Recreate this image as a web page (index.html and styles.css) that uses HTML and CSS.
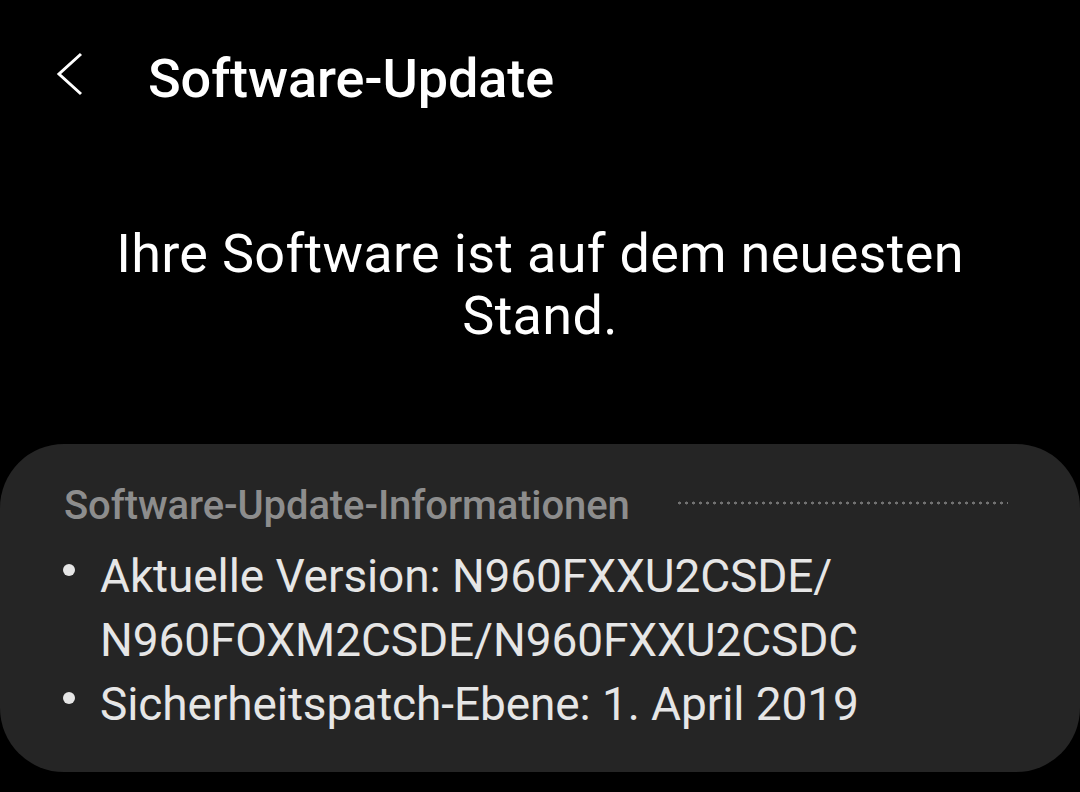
FILE: index.html
```html
<!DOCTYPE html>
<html>
<head>
	<title>Software-Update</title>
	<link rel="stylesheet" href="styles.css">
</head>
<body>
	<div class="screen">
		<header class="appbar">
			<svg class="back" width="28" height="44" viewBox="0 0 28 44">
				<polyline points="25,2 3,22 25,42" fill="none" stroke="#fff" stroke-width="3"/>
			</svg>
			<h1 class="title">Software-Update</h1>
		</header>

		<p class="status">Ihre Software ist auf dem neuesten Stand.</p>

		<section class="card">
			<div class="card_head">
				<span class="card_title">Software-Update-Informationen</span>
				<span class="dots"></span>
			</div>
			<ul class="info">
				<li>Aktuelle Version: N960FXXU2CSDE/ N960FOXM2CSDE/N960FXXU2CSDC</li>
				<li>Sicherheitspatch-Ebene: 1. April 2019</li>
			</ul>
		</section>
	</div>
</body>
</html>
```

FILE: styles.css
```css
html, body { margin: 0; padding: 0; background: #000; }
body { font-family: Roboto, "Noto Sans", sans-serif; color: #fff; }

.screen { width: 1080px; height: 792px; overflow: hidden; }

.appbar { display: flex; align-items: center; height: 80px; padding: 38px 0 0 56px; }
.back { margin-right: 64px; margin-bottom: 9px; }
.title { margin: 0; font-size: 54px; font-weight: 500; letter-spacing: -0.1px; }

.status { margin: 105px 40px 0; text-align: center; font-size: 54px; line-height: 62px; letter-spacing: 0.3px; }

.card { margin-top: 97px; background: #252525; border-radius: 64px; padding: 38px 72px 36px 64px; }
.card_head { display: flex; align-items: center; }
.card_title { color: #8d8d8d; font-size: 40px; line-height: 48px; font-weight: 500; letter-spacing: -0.1px; white-space: nowrap; }
.dots { flex: 1; margin-left: 46px; height: 4px; margin-top: -6px;
	background-image: radial-gradient(circle, #727272 1.3px, transparent 1.7px);
	background-size: 7px 4px; }

.info { list-style: none; margin: 14px 0 0; padding: 0; color: #e6e6e6; font-size: 46px; line-height: 64px; }
.info li { position: relative; padding-left: 36px; letter-spacing: -0.1px; }
.info li::before { content: ""; position: absolute; left: -1px; top: 20px; width: 12px; height: 12px; border-radius: 50%; background: #e6e6e6; }
```
